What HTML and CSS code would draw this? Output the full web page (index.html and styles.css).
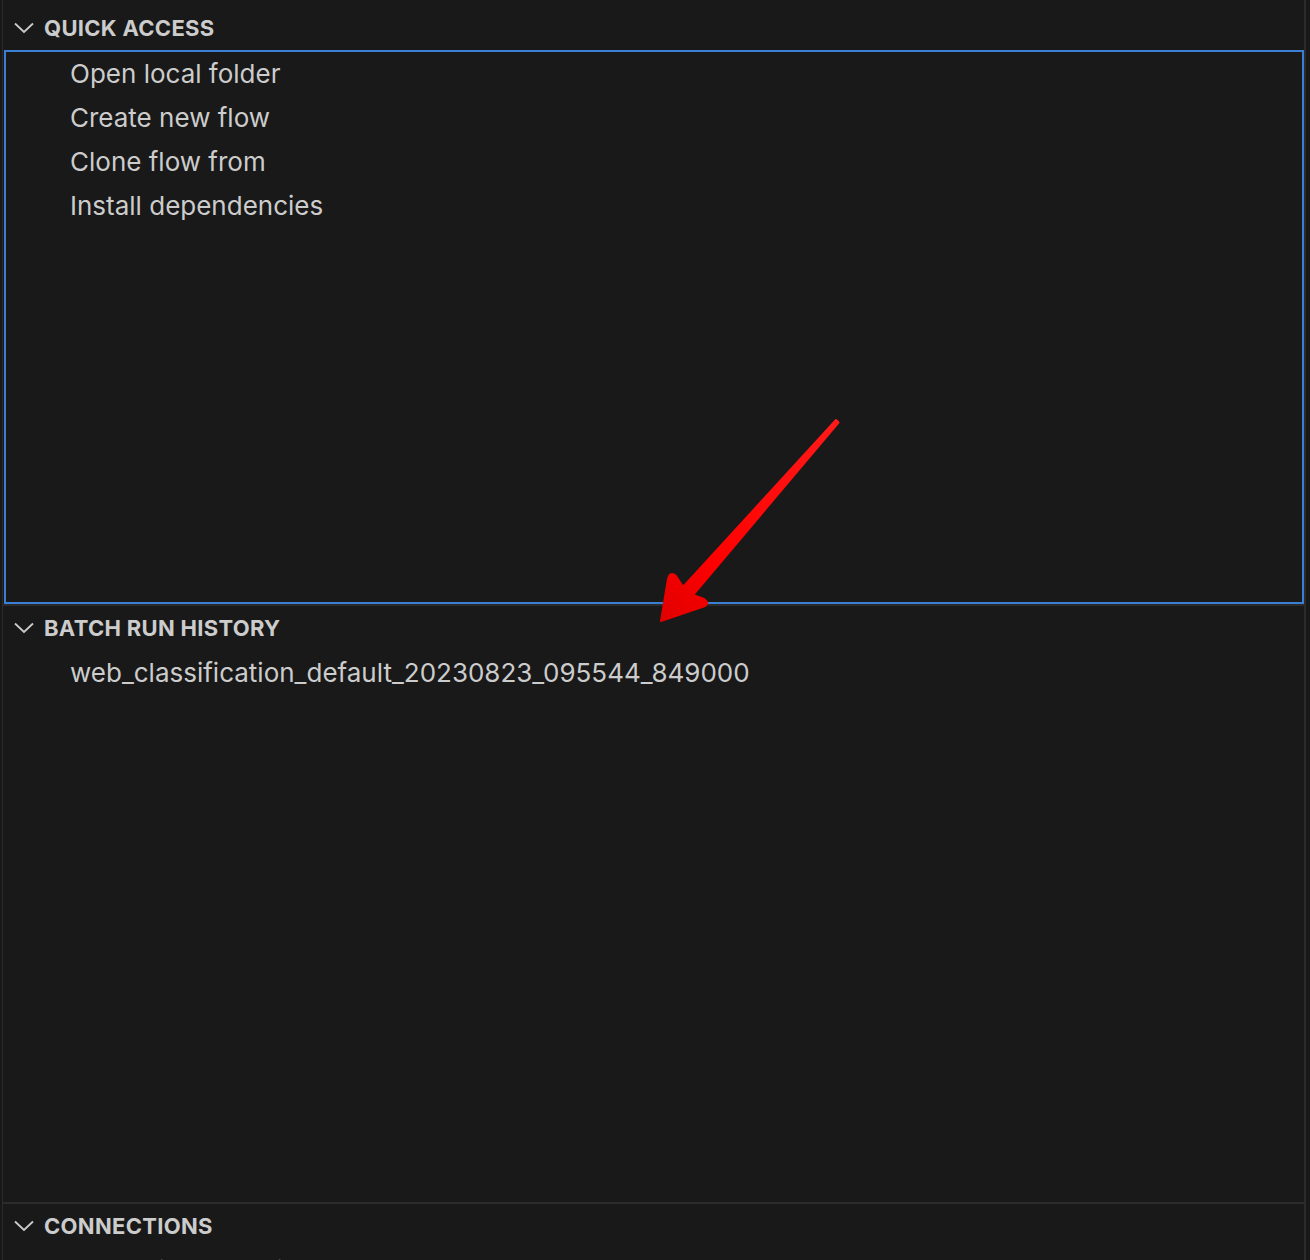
FILE: index.html
```html
<!DOCTYPE html>
<html>
<head>
<meta charset="utf-8">
<link rel="stylesheet" href="styles.css">
</head>
<body>
<div class="frame">
  <div class="edge-left"></div>
  <div class="sidebar">
    <div class="pane pane-quick">
      <div class="pane-header">
        <svg class="chev" viewBox="0 0 20 12" width="20" height="12"><path d="M1 1.5 L10 10 L19 1.5" fill="none" stroke="#cccccc" stroke-width="1.8"/></svg>
        <span class="title">QUICK ACCESS</span>
      </div>
      <div class="pane-body focused">
        <div class="row">Open local folder</div>
        <div class="row">Create new flow</div>
        <div class="row">Clone flow from</div>
        <div class="row">Install dependencies</div>
      </div>
    </div>
    <div class="pane pane-history">
      <div class="pane-header">
        <svg class="chev" viewBox="0 0 20 12" width="20" height="12"><path d="M1 1.5 L10 10 L19 1.5" fill="none" stroke="#cccccc" stroke-width="1.8"/></svg>
        <span class="title">BATCH RUN HISTORY</span>
      </div>
      <div class="pane-body">
        <div class="row">web_classification_default_20230823_095544_849000</div>
      </div>
    </div>
    <div class="pane pane-conn">
      <div class="pane-header">
        <svg class="chev" viewBox="0 0 20 12" width="20" height="12"><path d="M1 1.5 L10 10 L19 1.5" fill="none" stroke="#cccccc" stroke-width="1.8"/></svg>
        <span class="title">CONNECTIONS</span>
      </div>
      <div class="pane-body">
        <div class="row">open_ai_connection</div>
      </div>
    </div>
  </div>
  <div class="edge-right"></div>
</div>
<svg class="arrow" width="1310" height="1260" viewBox="0 0 1310 1260">
  <defs>
    <linearGradient id="ag" x1="837" y1="420" x2="660" y2="622" gradientUnits="userSpaceOnUse">
      <stop offset="0" stop-color="#ff1a1a"/>
      <stop offset="0.7" stop-color="#ff0000"/>
      <stop offset="1" stop-color="#e00000"/>
    </linearGradient>
  </defs>
  <path d="M836 420 L838.5 422.5 L693 595 L704 599 Q710 603 705 606 L661 621 L668 579 Q670 571 676 576 L683 587 Z" fill="url(#ag)" stroke="url(#ag)" stroke-width="2" stroke-linejoin="round"/>
</svg>
</body>
</html>
```

FILE: styles.css
```css
* {
  box-sizing: border-box;
}

html, body {
  margin: 0;
  padding: 0;
  background: #181818;
  width: 1310px;
  height: 1260px;
  overflow: hidden;
}

.frame {
  display: flex;
  height: 1260px;
  font-family: Inter, "Noto Sans", sans-serif;
  color: #cccccc;
}

.edge-left {
  width: 3px;
  background: #181818;
  border-right: 1px solid #2b2b2b;
}

.edge-right {
  width: 2px;
  background: #2b2b2b;
  margin-right: 4px;
}

.sidebar {
  flex: 1;
  display: flex;
  flex-direction: column;
  background: #191919;
  overflow: hidden;
}

.pane {
  display: flex;
  flex-direction: column;
  flex-shrink: 0;
}

.pane-quick {
  height: 604px;
  padding-top: 6px;
}

.pane-history {
  height: 598px;
  border-top: 2px solid #2b2b2b;
}

.pane-conn {
  flex: 1;
  border-top: 2px solid #2b2b2b;
}

.pane-header {
  height: 44px;
  display: flex;
  align-items: center;
  padding-left: 11px;
  flex-shrink: 0;
}

.chev {
  display: block;
  margin-right: 10px;
}

.title {
  font-size: 22px;
  font-weight: 700;
  letter-spacing: 0.3px;
}

.pane-body {
  flex: 1;
  display: flex;
  flex-direction: column;
}

.pane-body.focused {
  margin-left: 1px;
  border: 2px solid #3b7fd4;
}

.row {
  height: 44px;
  display: flex;
  align-items: center;
  padding-left: 67px;
  font-size: 26px;
  white-space: nowrap;
  flex-shrink: 0;
}

.focused .row {
  padding-left: 64px;
  margin-top: -1px;
  margin-bottom: 1px;
}

.arrow {
  position: absolute;
  left: 0;
  top: 0;
  pointer-events: none;
}
```
